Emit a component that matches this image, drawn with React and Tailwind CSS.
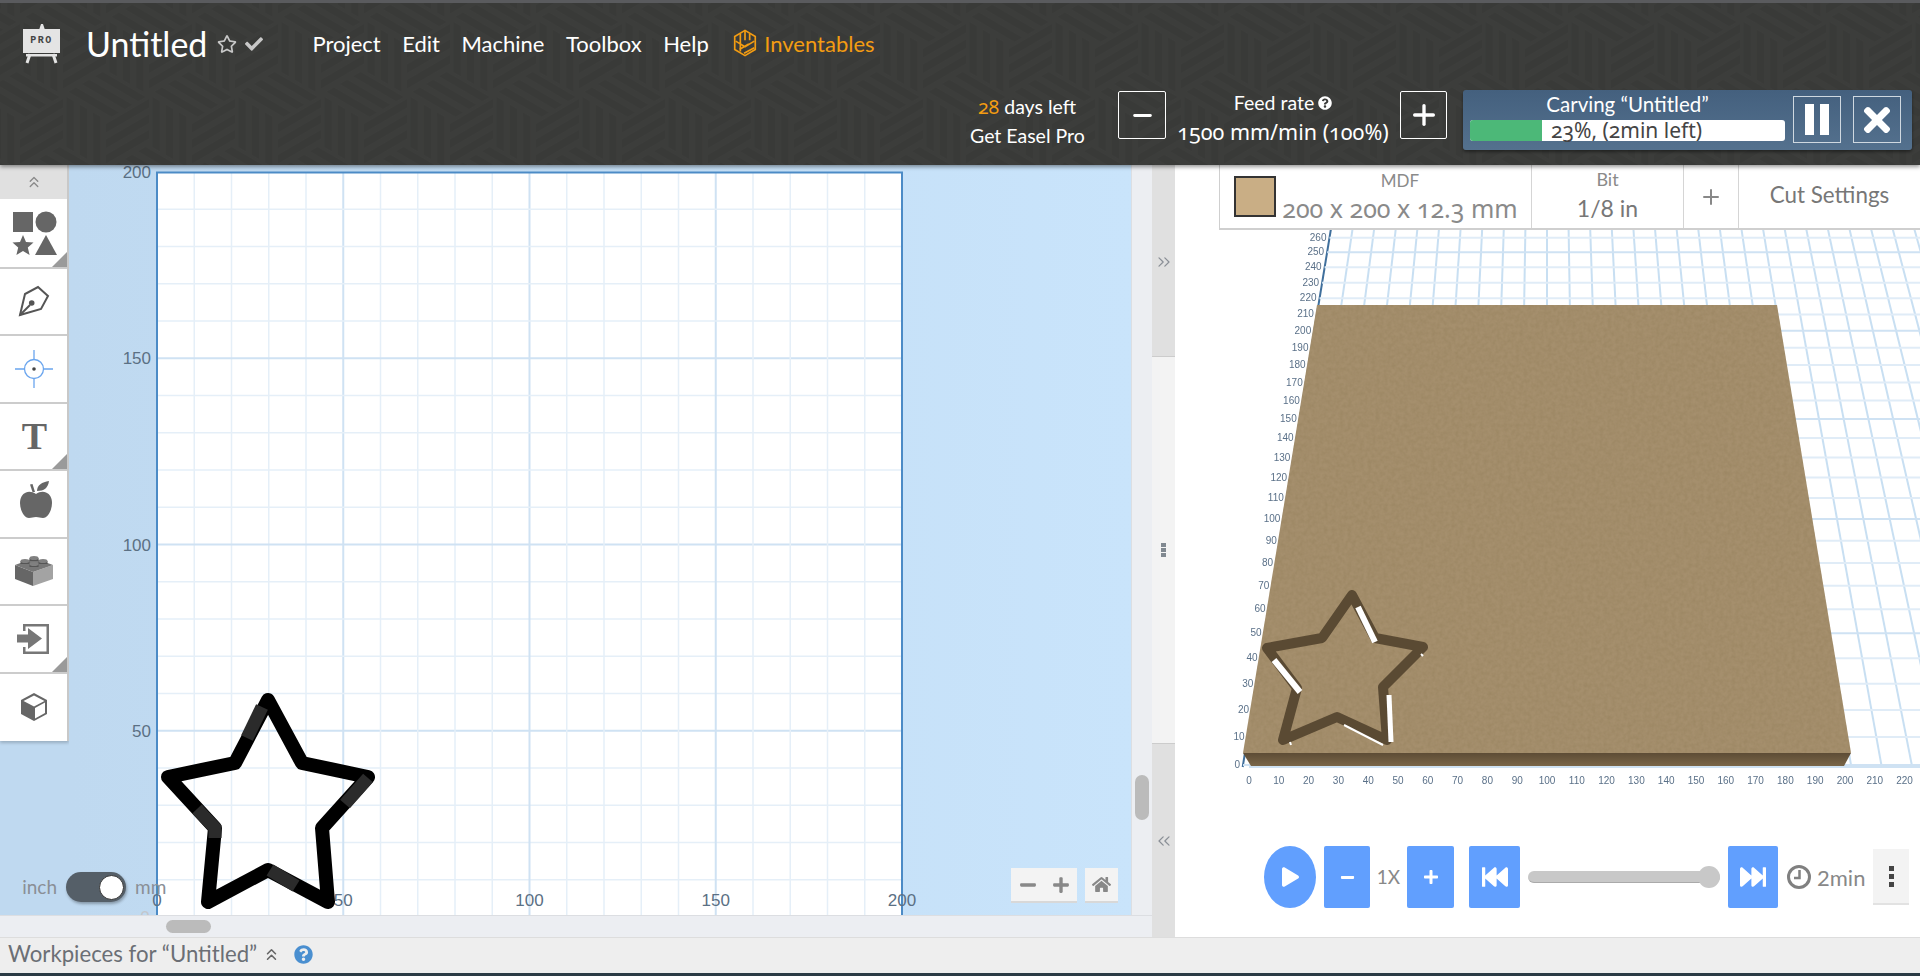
import { useMemo } from "react";
import { ChevronsUp, ChevronsLeft, ChevronsRight, Minus, Plus } from "lucide-react";
import {
  FaRegStar,
  FaCheck,
  FaQuestionCircle,
  FaTimes,
  FaHome,
  FaPlay,
  FaPlus,
  FaMinus,
  FaFastBackward,
  FaFastForward,
} from "react-icons/fa";

const LATO = "font-[family-name:Lato,sans-serif]";
// old-style figures, Lato here only has lining ones
const NUMS = "font-[family-name:'Noto_Sans',sans-serif] oldstyle-nums";

// header background: cube tile with three striped faces
function faceStripes(px, py, ux, uy, vx, vy) {
  const out = [];
  for (let i = 0; i < 3; i++) {
    const a = 0.08 + i * 0.31;
    const b = a + 0.17;
    out.push(
      [
        [px + a * ux, py + a * uy],
        [px + b * ux, py + b * uy],
        [px + b * ux + vx, py + b * uy + vy],
        [px + a * ux + vx, py + a * uy + vy],
      ]
        .map((p) => p.join(","))
        .join(" ")
    );
  }
  return out;
}

function cubeStripes(cx, cy) {
  return [
    ...faceStripes(cx - 43, cy - 25, 43, 25, 0, 50),
    ...faceStripes(cx, cy - 50, -43, 25, 43, 25),
    ...faceStripes(cx, cy, 0, 50, 43, -25),
  ];
}

function HeaderPattern() {
  const stripes = useMemo(
    () => [[43, 50], [0, 125], [86, 125], [0, -25], [86, -25]].flatMap(([x, y]) => cubeStripes(x, y)),
    []
  );
  return (
    <svg className="absolute inset-0 w-full h-full" aria-hidden="true">
      <defs>
        <pattern id="cubes" x="20" y="-8" width="86" height="150" patternUnits="userSpaceOnUse">
          {stripes.map((s, i) => (
            <polygon key={i} points={s} fill="#393a38" />
          ))}
        </pattern>
      </defs>
      <rect width="100%" height="100%" fill="url(#cubes)" />
    </svg>
  );
}

function EaselLogo() {
  return (
    <div className="relative w-[38px] h-[40px]">
      <svg viewBox="0 0 38 40" className="absolute inset-0 w-full h-full">
        <path d="M18 0h2l2 6h-6z" fill="#e4e4e4" />
        <rect x="0" y="5" width="37" height="24" fill="#e4e4e4" />
        <rect x="3" y="30" width="31" height="2.5" fill="#e4e4e4" />
        <path d="M7 30l-3 9M30 30l3 9" stroke="#e4e4e4" strokeWidth="3" />
      </svg>
      <span className="absolute left-0 top-[11px] w-[37px] text-center text-[10px] leading-[12px] font-bold tracking-[1.5px] text-[#444] font-[family-name:'Liberation_Mono',monospace]">
        PRO
      </span>
    </div>
  );
}

function InventablesIcon() {
  return (
    <svg viewBox="0 0 26 30" className="w-[26px] h-[28px]" fill="none" stroke="#f39c12" strokeWidth="1.8">
      <path d="M13 1.5l11 6.5v14l-11 6.5-11-6.5V8z" />
      <path d="M8 5v19M13 2v10M18 5v7M3 13l10 6 10-6M7 22l10-6M12 26l11-6" />
    </svg>
  );
}

function Corner() {
  return <div className="absolute right-0 bottom-0 w-0 h-0 border-l-[15px] border-l-transparent border-b-[15px] border-b-[#9a9a9a]" />;
}

function ShapesIcon() {
  return (
    <svg viewBox="0 0 46 46" className="w-[46px] h-[46px] ml-[2px]" fill="#666">
      <rect x="1" y="1" width="20" height="20" />
      <circle cx="34" cy="11" r="10.5" />
      <path d="M11 24l3 7 7.500 .6-5.700 4.900 1.800 7.500-6.600-4-6.600 4 1.800-7.500L.5 31.600 8 31z" />
      <path d="M34 24l11 20H23z" />
    </svg>
  );
}

function PenIcon() {
  return (
    <svg viewBox="0 0 32 32" className="w-[32px] h-[32px] ml-[1px]" fill="none" stroke="#555" strokeWidth="2">
      <path d="M2 30L7 9l13-7 10 9-7 13z" strokeLinejoin="miter" />
      <path d="M2 30l10-10" />
      <circle cx="13.700" cy="18" r="2.800" fill="#555" stroke="none" />
    </svg>
  );
}

function TargetIcon() {
  return (
    <svg viewBox="0 0 40 40" className="w-[40px] h-[40px]" fill="none" stroke="#6aa5ee" strokeWidth="1.3">
      <circle cx="20" cy="20" r="9.500" />
      <path d="M1 20h9.500M29.500 20H39M20 1v9.500M20 29.500V39" />
      <circle cx="20" cy="20" r="1.800" fill="#444" stroke="none" />
    </svg>
  );
}

function AppleIcon() {
  return (
    <svg viewBox="0 0 34 40" className="w-[34px] h-[40px] ml-[4px] mb-[8px]" fill="#666">
      <path d="M17 14c-3-2-7-3-10-1.500C3 14 1 18 1 23c0 7 4 15 9 15 3 0 4-1 7-1s4 1 7 1c5 0 9-8 9-15 0-5-2-9-6-10.500-3-1.500-7-.5-10 1.500z" />
      <path d="M11 4.500l2.500-.5 2.500 8h-2.500z" />
      <path d="M18 11c0-6 5-9 12-10-1 7-5 10-12 10z" />
    </svg>
  );
}

function BrickIcon() {
  return (
    <svg viewBox="0 0 40 32" className="w-[40px] h-[32px]">
      <path d="M1 10l18 7v14L1 24z" fill="#666" />
      <path d="M19 17l20-7v14l-20 7z" fill="#a3a3a3" />
      <path d="M1 10L20 3l19 7-20 7z" fill="#777" />
      {[[20, 5], [11, 8], [29, 8], [20, 11]].map(([x, y]) => (
        <g key={x + "-" + y}>
          <rect x={x - 4.500} y={y - 2} width="9" height="3" fill="#555" />
          <ellipse cx={x} cy={y - 2} rx="4.500" ry="2" fill="#808080" />
        </g>
      ))}
    </svg>
  );
}

function ImportIcon() {
  return (
    <svg viewBox="0 0 34 34" className="w-[34px] h-[34px]">
      <path d="M6 2h26v30H6v-7h2.500v4.500h21v-25h-21V9H6z" fill="#777" />
      <path d="M0 13h11V6.500L25 17 11 27.500V21H0z" fill="#777" transform="translate(0 -.5)" />
    </svg>
  );
}

function CubeIcon() {
  return (
    <svg viewBox="0 0 28 30" className="w-[28px] h-[30px]">
      <path d="M14 1l13 7v14l-13 7-13-7V8z" fill="#666" />
      <path d="M14 3.500L24.500 9 14 14.500 3.500 9z" fill="#fff" />
      <path d="M15 16l10-5.500v10.500l-10 5.500z" fill="#fff" />
    </svg>
  );
}

function ClockIcon() {
  return (
    <svg viewBox="0 0 26 26" className="w-[26px] h-[26px] ml-[8px] shrink-0" fill="none" stroke="#808080">
      <circle cx="13" cy="13" r="10.500" strokeWidth="3" />
      <path d="M13.500 6v8H8" strokeWidth="2.500" />
    </svg>
  );
}

const TOOLS = [
  { icon: <ShapesIcon />, corner: true },
  { icon: <PenIcon /> },
  { icon: <TargetIcon /> },
  { icon: <span className="text-[38px] leading-none font-bold text-[#666] ml-[2px] font-[family-name:'Liberation_Serif',serif]">T</span>, corner: true },
  { icon: <AppleIcon /> },
  { icon: <BrickIcon /> },
  { icon: <ImportIcon />, corner: true },
  { icon: <CubeIcon /> },
];

function Toolbar() {
  return (
    <div className="w-[69px] self-start shrink-0 bg-white border-r-2 border-[#c8c8c8] shadow-[0_2px_3px_rgba(0,0,0,0.2)]">
      <div className="h-[36px] bg-[#e0e0e0] border-b-2 border-white flex items-center justify-center">
        <ChevronsUp className="w-[18px] h-[18px] text-[#8a8a8a]" strokeWidth={1.8} />
      </div>
      {TOOLS.map((t, i) => (
        <div key={i} className="relative h-[67.5px] border-b-2 border-[#cccccc] last:border-b-0 flex items-center justify-center">
          {t.icon}
          {t.corner && <Corner />}
        </div>
      ))}
    </div>
  );
}

// 2D design surface, coordinates are page pixels
const MM = 3.725;
const X0 = 157;
const Y0 = 917;

function DesignCanvas() {
  const lines = [];
  for (let i = 1; i < 20; i++) lines.push(i * 10);
  const labels = [200, 150, 100, 50];
  const outer = "268,700 302,763 368,777 322,828 328,902 268,870 208,902 215,828 168,777 235,763";
  return (
    <svg viewBox="69 165 1062 750" className="absolute inset-0 w-full h-full overflow-visible">
      <rect x={X0} y={172} width={745} height={743} fill="#fff" />
      {lines.map((m) => {
        const major = m % 50 === 0;
        const s = major ? "#cfe2f3" : "#e5eff8";
        return (
          <g key={m} stroke={s} strokeWidth={major ? 2 : 1.5}>
            <line x1={X0 + m * MM} y1={172} x2={X0 + m * MM} y2={915} />
            <line x1={X0} y1={Y0 - m * MM} x2={902} y2={Y0 - m * MM} />
          </g>
        );
      })}
      <path d={`M${X0} 915V172.500H902V915`} fill="none" stroke="#4c8bc6" strokeWidth="2" />
      <g fontFamily="'Liberation Sans',sans-serif" fontSize="17" fill="#5b7084">
        {labels.map((v) => (
          <text key={v} x="151" y={Y0 - v * MM + 6} textAnchor="end">{v}</text>
        ))}
        <text x={X0} y="906" textAnchor="middle">0</text>
        {[50, 100, 150, 200].map((v) => (
          <text key={v} x={X0 + v * MM} y="906" textAnchor="middle">{v}</text>
        ))}
        <text x="145" y="923" textAnchor="middle" fill="#c3c6cb">0</text>
      </g>
      <polygon points={outer} fill="none" stroke="#000" strokeWidth="14" strokeLinejoin="round" />
      <g fill="none" stroke="#2b2b2b" strokeWidth="13">
        <path d="M262 707L247 738" />
        <path d="M197 809L215 828V838" />
        <path d="M368 778L345 804" />
        <path d="M270 870L296 886" />
      </g>
    </svg>
  );
}

function UnitToggle() {
  return (
    <div className={`absolute left-[-56px] top-[707px] flex items-center text-[19px] text-[#8a8f96] ${LATO}`}>
      <span className="w-[44px] text-right mr-[9px]">inch</span>
      <div className="relative w-[60px] h-[30px] rounded-full bg-[#555f68] shadow-[1px_2px_3px_rgba(0,0,0,0.3)]">
        <div className="absolute right-[2px] top-[3px] w-[25px] h-[25px] rounded-full bg-white border border-[#333]" />
      </div>
      <span className="ml-[9px]">mm</span>
    </div>
  );
}

function ZoomControls() {
  return (
    <div className="absolute right-[13px] top-[703px] flex gap-[8px] text-[#888]">
      <div className="w-[66px] h-[35px] bg-[#f3f3f3] border-b-2 border-[#d8d8d8] flex items-center justify-center gap-[15px]">
        <FaMinus className="w-[18px] h-[18px]" />
        <FaPlus className="w-[18px] h-[18px]" />
      </div>
      <div className="w-[33px] h-[35px] bg-[#f3f3f3] border-b-2 border-[#d8d8d8] flex items-center justify-center">
        <FaHome className="w-[19px] h-[19px]" />
      </div>
    </div>
  );
}

// 3D preview: a perspective projection of the bed
const VY = -1088;
const H = 1853;
const K = 0.00153;
function projY(d) {
  return VY + H / (1 + K * d);
}
function projX(k, y) {
  return 1547 + (k - 100) * 3.04 * ((y - VY) / H);
}

function PreviewScene() {
  const ks = [];
  for (let k = 0; k <= 300; k += 10) ks.push(k);
  const ds = [];
  for (let d = 0; d <= 270; d += 10) ds.push(d);
  const yBack = projY(270);
  const star = "1352,595 1375,638 1423,647 1383,687 1387,740 1337,717 1283,740 1297,688 1267,648 1322,638";
  return (
    <svg viewBox="1175 230 745 616" className="absolute inset-0 w-full h-full overflow-hidden">
      <defs>
        <filter id="grain" x="0" y="0" width="100%" height="100%">
          <feTurbulence type="fractalNoise" baseFrequency="0.25" numOctaves="4" seed="4" />
          <feColorMatrix values="0 0 0 0 0.25  0 0 0 0 0.18  0 0 0 0 0.08  0 0 0 1.1 -0.32" />
          <feComposite in2="SourceGraphic" operator="in" />
        </filter>
        <linearGradient id="side" x1="0" y1="0" x2="0" y2="1">
          <stop offset="0" stopColor="#5d4c35" />
          <stop offset="1" stopColor="#7a6648" />
        </linearGradient>
      </defs>
      {ks.map((k) => (
        <line key={k} x1={projX(k, 767)} y1={767} x2={projX(k, yBack)} y2={yBack} stroke={k === 0 ? "#3f6f9c" : "#c8dff2"} strokeWidth="2" />
      ))}
      {ds.map((d) => {
        const y = projY(d);
        return <line key={d} x1={projX(0, y)} y1={y} x2={1920} y2={y} stroke={d % 50 === 0 ? "#cfe2f3" : "#e0ecf7"} strokeWidth="2" />;
      })}
      <line x1={1249} y1={767} x2={1920} y2={767} stroke="#cfe2f3" strokeWidth="2" />
      <g fontFamily="'Liberation Sans',sans-serif" fontSize="10" fill="#5a7088" className="blur-[0.6px]">
        {ds.filter((d) => d < 270).map((d) => {
          const y = projY(d);
          return (
            <text key={d} x={projX(0, y) - 3} y={y + 3} textAnchor="end">{d}</text>
          );
        })}
        {[...Array(23).keys()].map((i) => (
          <text key={i} x={1249 + i * 29.8} y="784" textAnchor="middle">{i * 10}</text>
        ))}
      </g>
      <polygon points="1243,753 1851,753 1844,766 1251,766" fill="url(#side)" />
      <polygon points="1317,305 1777,305 1851,753 1243,753" fill="#a58f6d" />
      <polygon points="1317,305 1777,305 1851,753 1243,753" filter="url(#grain)" opacity="0.45" />
      <polygon points={star} fill="none" stroke="#5a4a33" strokeWidth="10" strokeLinejoin="round" />
      <g fill="none" stroke="#fff" strokeLinecap="butt">
        <path d="M1358 607L1375 642" strokeWidth="6" />
        <path d="M1274 660L1300 692" strokeWidth="6" />
        <path d="M1389 695L1391 742" strokeWidth="5" />
        <path d="M1344 725L1383 745" strokeWidth="2" />
        <path d="M1421 654L1423 656" strokeWidth="2" />
        <path d="M1290 742L1291 745" strokeWidth="2" />
      </g>
    </svg>
  );
}

function BlueBtn({ className, children }) {
  return <div className={`h-[62px] bg-[#619ffe] rounded-[2px] flex items-center justify-center text-white shrink-0 ${className}`}>{children}</div>;
}

function Playback() {
  return (
    <div className={`h-[62px] mb-[29px] pl-[89px] flex items-center text-[#888] ${LATO}`}>
      <BlueBtn className="w-[52px] rounded-[50%]"><FaPlay className="w-[17px] h-[20px]" /></BlueBtn>
      <BlueBtn className="w-[46px] ml-[8px]"><FaMinus className="w-[15px] h-[15px]" /></BlueBtn>
      <span className="w-[37px] text-center text-[19px]">1X</span>
      <BlueBtn className="w-[47px]"><FaPlus className="w-[16px] h-[16px]" /></BlueBtn>
      <BlueBtn className="w-[51px] ml-[15px]"><FaFastBackward className="w-[26px] h-[26px]" /></BlueBtn>
      <div className="relative w-[192px] h-[12px] ml-[8px] bg-[#c8c8c8] rounded-full border-b border-[#aaa]">
        <div className="absolute right-0 top-[-5px] w-[22px] h-[22px] rounded-full bg-[#c8c8c8]" />
      </div>
      <BlueBtn className="w-[50px] ml-[8px]"><FaFastForward className="w-[26px] h-[26px]" /></BlueBtn>
      <ClockIcon />
      <span className="w-[48px] ml-[5px] text-[22px] whitespace-nowrap">2min</span>
      <div className="w-[36px] h-[56px] ml-[8px] bg-[#f3f3f3] border-b-2 border-[#e2e2e2] flex flex-col items-center justify-center gap-[3px]">
        <div className="w-[5px] h-[5px] bg-[#444]" />
        <div className="w-[5px] h-[5px] bg-[#444]" />
        <div className="w-[5px] h-[5px] bg-[#444]" />
      </div>
    </div>
  );
}

function Stock() {
  return (
    <div className={`ml-[44px] h-[65px] shrink-0 relative z-[1] bg-white flex border-l border-b-2 border-[#cfcfcf] text-[#8a8a8a] ${LATO}`}>
      <div className="w-[312px] flex items-center pl-[14px] border-r border-[#d5d5d5]">
        <div className="w-[42px] h-[41px] bg-[#c9ae85] border-2 border-[#333] shrink-0" />
        <div className="ml-[4px] w-[240px] text-center">
          <div className="text-[17px] leading-[24px] mt-[-2px]">MDF</div>
          <div className={`text-[25px] leading-[30px] whitespace-nowrap ${NUMS}`}>200 x 200 x 12.3 mm</div>
        </div>
      </div>
      <div className="w-[152px] text-center border-r border-[#d5d5d5] pt-[2px]">
        <div className="text-[18px] leading-[24px]">Bit</div>
        <div className="text-[23px] leading-[30px] mt-[2px] text-[#777]">1/8 in</div>
      </div>
      <div className="w-[55px] flex items-center justify-center border-r border-[#d5d5d5]">
        <Plus className="w-[24px] h-[24px] text-[#888]" strokeWidth={2} />
      </div>
      <div className="flex-1 flex items-center justify-center text-[22.400px] text-[#777] pb-[4px]">Cut Settings</div>
    </div>
  );
}

function Header() {
  return (
    <header className={`relative z-20 h-[165px] shrink-0 bg-[#3c3d3b] border-t-[3px] border-[#5a5b5e] text-white shadow-[0_2px_4px_rgba(0,0,0,0.4)] ${LATO}`}>
      <HeaderPattern />
      <div className="relative h-[82px] flex items-center">
        <div className="ml-[23px]"><EaselLogo /></div>
        <span className="ml-[25px] text-[34px] leading-none">Untitled</span>
        <FaRegStar className="ml-[10px] w-[20px] h-[20px] text-[#c8c8c8]" />
        <FaCheck className="ml-[7px] w-[20px] h-[18px] text-[#c8c8c8]" />
        <nav className="ml-[48px] mt-[-2px] flex items-center gap-[21.500px] text-[22px]">
          <span>Project</span>
          <span>Edit</span>
          <span>Machine</span>
          <span>Toolbox</span>
          <span>Help</span>
          <span className="ml-[2px] flex items-center gap-[6px] text-[#f39c12]">
            <InventablesIcon />
            Inventables
          </span>
        </nav>
      </div>
      <div className="relative flex items-start pl-[970px]">
        <div className="w-[114px] mt-[7px] text-center text-[19.500px] leading-[29px] whitespace-nowrap">
          <div><span className={`text-[#f39c12] ${NUMS}`}>28</span> days left</div>
          <div>Get Easel Pro</div>
        </div>
        <button className="w-[48px] h-[48px] ml-[34px] mt-[6px] border border-white rounded-[2px] flex items-center justify-center">
          <Minus className="w-[27px] h-[27px]" strokeWidth={2.500} />
        </button>
        <div className="w-[234px] text-center leading-[29px] mt-[3px] whitespace-nowrap">
          <div className="flex items-center justify-center gap-[4px] text-[19.500px]">
            Feed rate <FaQuestionCircle className="w-[14px] h-[14px]" />
          </div>
          <div className={`text-[21.500px] ${NUMS}`}>1500 mm/min (100%)</div>
        </div>
        <button className="w-[47px] h-[48px] mt-[6px] border border-white rounded-[2px] flex items-center justify-center">
          <Plus className="w-[32px] h-[32px]" strokeWidth={2.500} />
        </button>
        <div className="w-[449px] h-[60px] ml-[16px] mt-[5px] rounded-[3px] bg-gradient-to-b from-[#44607e] to-[#54718e] flex shadow-[0_2px_3px_rgba(0,0,0,0.4)]">
          <div className="w-[315px] ml-[7px] shrink-0">
            <div className="text-center text-[20.500px] leading-[28px] mb-[2px]">Carving “Untitled”</div>
            <div className={`relative h-[21px] bg-white rounded-[3px] text-[#444] text-[21px] leading-[21px] ${NUMS}`}>
              <div className="absolute left-0 top-0 h-full w-[72px] bg-[#4cb878] rounded-l-[3px]" />
              <span className="absolute left-[81px] whitespace-nowrap">23%, (2min left)</span>
            </div>
          </div>
          <button className="w-[48px] h-[47px] ml-[8px] mt-[6px] border border-[#cfd8e0] flex items-center justify-center gap-[6px]">
            <div className="w-[9px] h-[31px] bg-white" />
            <div className="w-[9px] h-[31px] bg-white" />
          </button>
          <button className="w-[48px] h-[47px] ml-[12px] mt-[6px] border border-[#cfd8e0] flex items-center justify-center">
            <FaTimes className="w-[36px] h-[38px] text-white" />
          </button>
        </div>
      </div>
    </header>
  );
}

export default function App() {
  return (
    <div className="w-[1920px] h-[976px] flex flex-col overflow-hidden bg-[#eeeeee]">
      <Header />
      <main className="h-[772px] flex shrink-0">
        <section className="w-[1152px] flex flex-col shrink-0">
          <div className="h-[750px] flex bg-[#bfd9f0]">
            <Toolbar />
            <div className="relative flex-1 bg-gradient-to-r from-[#bfd9f0] to-[#c9e4fb]">
              <DesignCanvas />
              <div className="absolute left-0 top-0"><UnitToggle /></div>
              <ZoomControls />
            </div>
            <div className="relative w-[21px] bg-[#eceef2] border-l border-[#dcdee2]">
              <div className="absolute left-[3px] top-[610px] w-[14px] h-[45px] rounded-full bg-[#bbbbbb]" />
            </div>
          </div>
          <div className="relative h-[22px] bg-[#eceef2] border-t border-[#dcdee2]">
            <div className="absolute left-[166px] top-[4px] w-[45px] h-[13px] rounded-full bg-[#bbbbbb]" />
          </div>
        </section>
        <div className="w-[23px] shrink-0 flex flex-col text-[#8a8f96]">
          <div className="h-[192px] bg-[#e0e0e0] flex items-center justify-center border-b border-[#cccccc]">
            <ChevronsRight className="w-[20px] h-[20px] mt-[2px]" strokeWidth={1.500} />
          </div>
          <div className="h-[386px] bg-[#f3f3f3] flex flex-col items-center justify-center gap-[1px]">
            <div className="w-[5px] h-[4px] bg-[#808890]" />
            <div className="w-[5px] h-[4px] bg-[#808890]" />
            <div className="w-[5px] h-[4px] bg-[#808890]" />
          </div>
          <div className="h-[194px] bg-[#e0e0e0] border-t border-[#cccccc] flex items-end justify-center pb-[86px]">
            <ChevronsLeft className="w-[20px] h-[20px]" strokeWidth={1.500} />
          </div>
        </div>
        <section className="flex-1 bg-white flex flex-col">
          <Stock />
          <div className="relative h-[616px] shrink-0">
            <PreviewScene />
          </div>
          <Playback />
        </section>
      </main>
      <footer className={`h-[36px] shrink-0 bg-[#eeeeee] border-t border-[#dddddd] flex items-center pl-[8px] pb-[3px] text-[22.200px] text-[#6b6f75] ${LATO}`}>
        Workpieces for “Untitled”
        <ChevronsUp className="ml-[5px] w-[19px] h-[19px] text-[#666]" strokeWidth={2} />
        <FaQuestionCircle className="ml-[13px] w-[19px] h-[19px] text-[#4a8fd0]" />
      </footer>
      <div className="h-[3px] shrink-0 bg-[#2b3b45]" />
    </div>
  );
}
